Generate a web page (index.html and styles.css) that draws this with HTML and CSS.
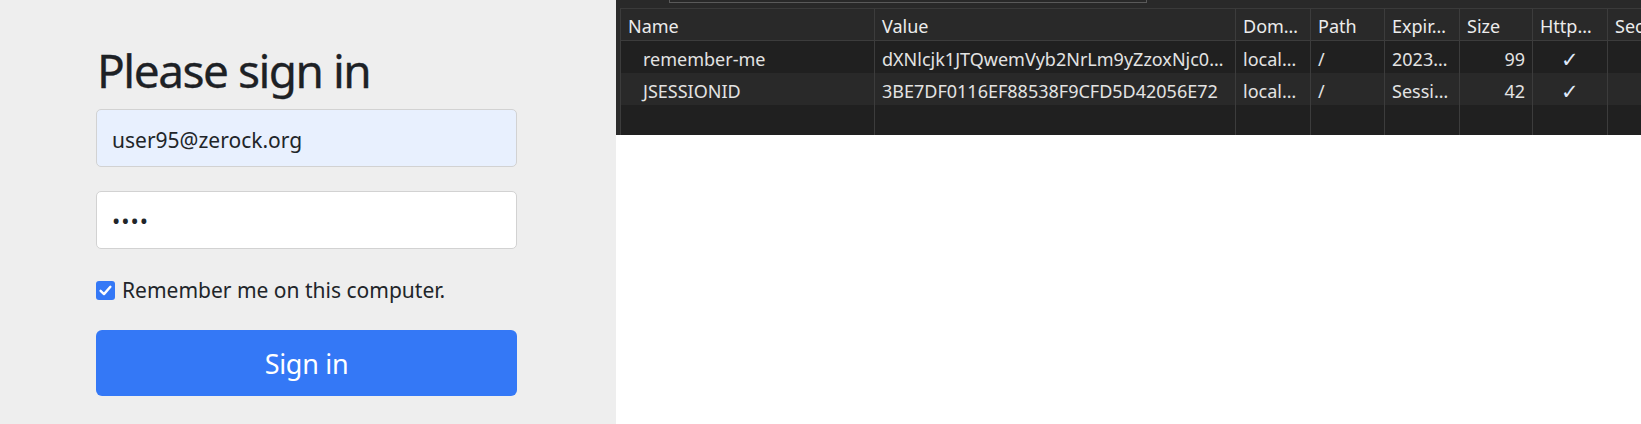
FILE: index.html
```html
<!DOCTYPE html>
<html lang="en">
<head>
<meta charset="utf-8">
<title>Please sign in</title>
<link rel="stylesheet" href="styles.css">
</head>
<body>
<main class="page">
  <section class="login">
    <form class="signin">
      <h2 class="title">Please sign in</h2>
      <div class="field field-filled">user95@zerock.org</div>
      <div class="field field-pass">••••</div>
      <label class="remember">
        <span class="check"><svg viewBox="0 0 19 19" width="19" height="19"><path d="M4.6 9.8 L8 13.1 L14.4 5.8" fill="none" stroke="#fff" stroke-width="2.4" stroke-linecap="round" stroke-linejoin="round"/></svg></span>
        <span class="remember-text">Remember me on this computer.</span>
      </label>
      <div class="btn">Sign in</div>
    </form>
  </section>
  <section class="devtools">
    <div class="panel">
      <div class="toolbar"><div class="filter"></div></div>
      <table class="cookies">
        <colgroup>
          <col class="c-name"><col class="c-value"><col class="c-dom"><col class="c-path"><col class="c-exp"><col class="c-size"><col class="c-http"><col class="c-sec">
        </colgroup>
        <thead>
          <tr>
            <th>Name</th><th>Value</th><th>Dom…</th><th>Path</th><th>Expir…</th><th>Size</th><th>Http…</th><th>Secure</th>
          </tr>
        </thead>
        <tbody>
          <tr class="row-a">
            <td class="name">remember-me</td><td>dXNlcjk1JTQwemVyb2NrLm9yZzoxNjc0…</td><td>local…</td><td>/</td><td>2023…</td><td class="num">99</td><td class="mid">✓</td><td></td>
          </tr>
          <tr class="row-b">
            <td class="name">JSESSIONID</td><td>3BE7DF0116EF88538F9CFD5D42056E72</td><td>local…</td><td>/</td><td>Sessi…</td><td class="num">42</td><td class="mid">✓</td><td></td>
          </tr>
          <tr class="row-empty">
            <td></td><td></td><td></td><td></td><td></td><td></td><td></td><td></td>
          </tr>
        </tbody>
      </table>
    </div>
  </section>
</main>
</body>
</html>
```
FILE: styles.css
```css
html, body {
  margin: 0;
  padding: 0;
  background: #ffffff;
}

.page {
  display: flex;
  width: 1641px;
  height: 424px;
  overflow: hidden;
}

.login {
  width: 616px;
  flex: none;
  height: 424px;
  background: #eeeeee;
  padding-left: 96px;
  box-sizing: border-box;
  font-family: "Noto Sans", "Open Sans", sans-serif;
  color: #212529;
}

.signin {
  width: 421px;
  display: flex;
  flex-direction: column;
}

.title {
  margin: 43px 0 0 1px;
  font-size: 46px;
  line-height: 55px;
  font-weight: 400;
  letter-spacing: -1.5px;
  color: #1d2125;
  -webkit-text-stroke: 0.3px #1d2125;
}

.field {
  margin-top: 11px;
  height: 58px;
  box-sizing: border-box;
  border: 1px solid #d2d2d2;
  border-radius: 5px;
  background: #ffffff;
  display: flex;
  align-items: center;
  padding: 4px 0 0 15px;
  font-size: 21px;
  color: #212529;
}

.field-filled {
  background: #e8f0fe;
}

.field-pass {
  margin-top: 24px;
  font-size: 22px;
  letter-spacing: 1px;
  padding-top: 0;
}

.remember {
  margin-top: 31px;
  height: 20px;
  display: flex;
  align-items: center;
  gap: 7px;
  font-size: 21px;
  color: #212529;
}

.check {
  width: 19px;
  height: 19px;
  flex: none;
  border-radius: 3px;
  background: #3478f6;
  display: flex;
}

.btn {
  margin-top: 30px;
  height: 66px;
  border-radius: 6px;
  background: #3478f6;
  color: #ffffff;
  display: flex;
  align-items: center;
  justify-content: center;
  font-size: 27px;
  letter-spacing: -0.3px;
}

.devtools {
  flex: 1;
  min-width: 0;
  background: #ffffff;
}

.panel {
  height: 135px;
  background: #202020;
  border-left: 4px solid #2b2b2b;
  overflow: hidden;
  font-family: "Noto Sans", "Open Sans", sans-serif;
  font-size: 18px;
  color: #e3e3e3;
}

.toolbar {
  height: 9px;
  box-sizing: border-box;
  background: #292929;
  border-bottom: 1px solid #3a3a3a;
  padding-left: 49px;
}

.filter {
  width: 478px;
  height: 3px;
  box-sizing: border-box;
  border: 1px solid #5a5a5a;
  border-top: none;
}

.cookies {
  border-collapse: separate;
  border-spacing: 0;
  table-layout: fixed;
  width: 1067px;
}

.c-name { width: 254px; }
.c-value { width: 361px; }
.c-dom { width: 75px; }
.c-path { width: 74px; }
.c-exp { width: 75px; }
.c-size { width: 73px; }
.c-http { width: 75px; }
.c-sec { width: 80px; }

.cookies th,
.cookies td {
  border-left: 1px solid #3c3c3c;
  padding: 3px 7px 0;
  white-space: nowrap;
  overflow: hidden;
  text-align: left;
  font-weight: 400;
  line-height: 20px;
}

.cookies th {
  height: 28px;
  background: #292929;
  border-bottom: 1px solid #3c3c3c;
  color: #ececec;
}

.cookies td {
  height: 29px;
}

.row-a td { background: #202020; }
.row-b td { background: #292929; }
.row-empty td { height: 30px; padding: 0; background: #202020; }

.cookies td.name {
  padding-left: 22px;
}

.cookies td.num {
  text-align: right;
  padding-right: 7px;
}

.cookies td.mid {
  text-align: center;
  font-size: 21px;
  color: #dfe8fa;
}
```
